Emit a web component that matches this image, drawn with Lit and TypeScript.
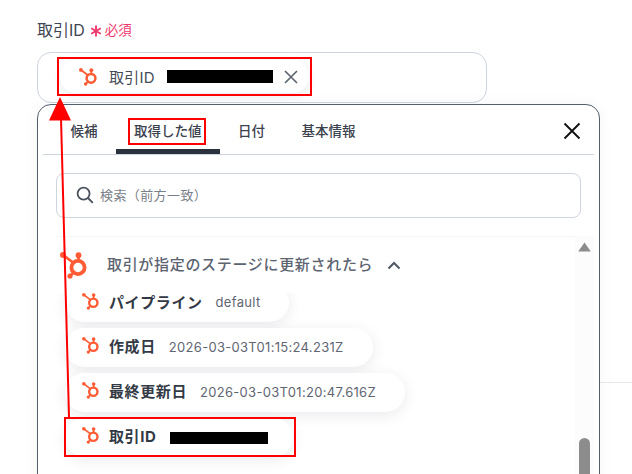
import { LitElement, html, css, svg } from "lit";
import { customElement } from "lit/decorators.js";

const spot = (cls: string) => html`<svg class=${cls} viewBox="0 0 27 27" aria-hidden="true">
  <g fill="none" stroke="#ff5c35" stroke-linecap="round">
    <circle cx="18" cy="15.500" r="6.600" stroke-width="3.800"/>
    <path d="M18.500 8V3.500M13 10.500 3 3M13.500 20.500 10 24" stroke-width="2.800"/>
  </g>
  <circle cx="18.500" cy="3.200" r="2.900" fill="#ff5c35"/>
  <circle cx="2.900" cy="2.900" r="2.900" fill="#ff5c35"/>
  <circle cx="10" cy="24" r="2.600" fill="#ff5c35"/>
</svg>`;

const rows = [
  { name: "パイプライン", value: "default", cls: "first" },
  { name: "作成日", value: "2026-03-03T01:15:24.231Z", cls: "" },
  { name: "最終更新日", value: "2026-03-03T01:20:47.616Z", cls: "" },
];

@customElement("app-root")
export class AppRoot extends LitElement {
  static styles = css`
    :host {
      display: block;
      position: relative;
      width: 632px;
      height: 474px;
      overflow: hidden;
      background: #fff;
      font-family: Inter, "Noto Sans CJK JP", sans-serif;
      color: #3c4350;
    }
    :host::after {
      content: "";
      position: absolute;
      left: 600px;
      right: 0;
      top: 382px;
      height: 1px;
      background: #e6e6e6;
    }
    .page { padding: 19px 0 0 37px; width: 600px; box-sizing: border-box; }
    .label { display: flex; align-items: center; height: 20px; font-size: 16px; color: #3f4652; margin-bottom: 13px; }
    .ast { height: 20px; width: 12px; margin-left: 5px; display: flex; flex: none; }
    .ast svg { width: 12px; height: 12px; margin-top: 6px; }
    .req { color: #ee3a6e; font-size: 13.500px; margin-left: 3px; }
    .field {
      width: 450px; height: 51px; box-sizing: border-box;
      border: 1px solid #ced4df; border-radius: 14px;
      padding: 7px 0 0 22px;
    }
    .chip {
      width: 249px; height: 33px; box-sizing: border-box;
      display: flex; align-items: center;
      border-radius: 17px; background: #fff;
      box-shadow: 0 2px 10px rgba(40, 50, 70, .1);
      padding-left: 19px;
      font-size: 15px; color: #444b57;
    }
    .ic-chip { width: 18px; height: 18px; flex: none; margin-right: 12px; }
    .chip .name { width: 58px; flex: none; letter-spacing: .2px; }
    .mask { background: #000; display: block; flex: none; }
    .chip .mask { width: 106px; height: 13px; }
    .x { width: 14px; height: 14px; margin-left: 11px; flex: none; }
    .pop {
      margin-top: 1px; height: 420px; box-sizing: border-box;
      border: 1px solid #555e6b; border-radius: 14px 14px 0 0;
      background: #fff;
      box-shadow: 0 0 14px rgba(40, 50, 70, .05);
      display: flex; flex-direction: column;
    }
    .tabs {
      display: flex; align-items: flex-end; height: 49px; flex: none;
      margin: 0 5px; border-bottom: 1px solid #cfd5df; padding-left: 9.250px; position: relative;
    }
    .tab {
      height: 44px; box-sizing: border-box; padding: 11px 18.250px 0;
      font-size: 13.500px; font-weight: 500; color: #3b424e; line-height: 20px;
      border-bottom: 5px solid transparent;
    }
    .tab.on { border-bottom-color: #2b323d; border-radius: 5px 5px 0 0; }
    .close { position: absolute; right: 13px; top: 17px; width: 18px; height: 18px; }
    .search {
      flex: none; margin: 18px 18px 0 18px; height: 45px; box-sizing: border-box;
      border: 1px solid #cfd5df; border-radius: 8px;
      display: flex; align-items: center; padding: 0 0 2px 19px;
      font-size: 13px; color: #7a8089; letter-spacing: .4px;
    }
    .search svg { width: 18px; height: 18px; margin-right: 6px; flex: none; }
    .body { flex: 1; margin-top: 18px; display: flex; min-height: 0; }
    .content { flex: 1; min-width: 0; padding-left: 18px; display: flex; flex-direction: column; }
    .head {
      height: 57px; flex: none; box-sizing: border-box; border-top: 1px solid #f3f4f6;
      display: flex; align-items: center; padding: 0 0 3px 4px;
      font-size: 15px; font-weight: 500; color: #5d6471; letter-spacing: .68px;
    }
    .ic-main { width: 27px; height: 27px; flex: none; margin-right: 20px; margin-top: 3px; }
    .chev { width: 14px; height: 9px; margin-left: 14px; flex: none; margin-top: 4px; }
    .list { flex: 1; min-height: 0; overflow: hidden; margin-left: -18px; padding: 0 0 0 27px; display: flex; flex-direction: column; gap: 6px; }
    .pill {
      align-self: flex-start; height: 39px; box-sizing: border-box; flex: none;
      display: flex; align-items: center;
      background: #fff; border-radius: 20px; padding: 0 29px 4px 17px;
      box-shadow: 0 3px 14px rgba(40, 50, 70, .1);
    }
    .pill.first { margin-top: -10px; padding-bottom: 3px; }
    .ic-row { width: 17px; height: 17px; flex: none; margin-right: 10px; }
    .pill b { font-size: 15px; font-weight: 700; color: #333a45; letter-spacing: .6px; margin-right: 13px; }
    .pill span { font-size: 13px; color: #5f6672; letter-spacing: .3px; margin-top: 2px; }
    .pill.pick { width: 228px; padding-right: 0; }
    .pill.pick .mask { width: 98px; height: 12px; margin-top: 4px; margin-left: 1px; }
    .track { flex: none; width: 19px; margin-right: 5px; background: #fcfcfc; display: flex; flex-direction: column; align-items: center; }
    .up { width: 13px; height: 10px; margin-top: 6px; flex: none; }
    .thumb { width: 11px; height: 60px; background: #8c8c8c; border-radius: 6px; margin-top: 186px; flex: none; }
    .arrow { position: absolute; left: 0; top: 0; width: 632px; height: 474px; pointer-events: none; }
    .mark { position: absolute; box-sizing: border-box; border: 2px solid #f00; pointer-events: none; }
    .mark-chip { left: 57px; top: 57px; width: 255px; height: 39px; }
    .mark-tab { left: 128px; top: 118px; width: 78px; height: 27px; }
    .mark-pick { left: 64px; top: 417px; width: 232px; height: 40px; }
  `;

  render() {
    return html`
      <div class="page">
        <div class="label">取引ID<span class="ast"><svg viewBox="0 0 12 12"><path d="M6 .5v11M1.200 3.200l9.600 5.600M10.800 3.200l-9.600 5.600" stroke="#ee3a6e" stroke-width="1.900" fill="none"/></svg></span><span class="req">必須</span></div>
        <div class="field">
          <div class="chip">
            ${spot("ic-chip")}
            <span class="name">取引ID</span>
            <i class="mask"></i>
            <svg class="x" viewBox="0 0 14 14"><path d="M1 1l12 12M13 1 1 13" stroke="#5e6671" stroke-width="1.700" fill="none"/></svg>
          </div>
        </div>
        <div class="pop">
          <div class="tabs">
            <div class="tab">候補</div>
            <div class="tab on">取得した値</div>
            <div class="tab">日付</div>
            <div class="tab">基本情報</div>
            <svg class="close" viewBox="0 0 18 18"><path d="M1.500 1.500l15 15M16.500 1.500l-15 15" stroke="#111" stroke-width="1.900" fill="none"/></svg>
          </div>
          <div class="search">
            <svg viewBox="0 0 18 18"><circle cx="7.600" cy="7.600" r="6" fill="none" stroke="#4a515c" stroke-width="1.800"/><path d="M12 12l4.800 4.800" stroke="#4a515c" stroke-width="1.800"/></svg>
            検索（前方一致）
          </div>
          <div class="body">
            <div class="content">
              <div class="head">
                ${spot("ic-main")}
                取引が指定のステージに更新されたら
                <svg class="chev" viewBox="0 0 14 9"><path d="M1.500 7.500 7 2l5.500 5.500" stroke="#4f5763" stroke-width="2" fill="none"/></svg>
              </div>
              <div class="list">
                ${rows.map(r => html`<div class="pill ${r.cls}">${spot("ic-row")}<b>${r.name}</b><span>${r.value}</span></div>`)}
                <div class="pill pick">${spot("ic-row")}<b>取引ID</b><i class="mask"></i></div>
              </div>
            </div>
            <div class="track">
              <svg class="up" viewBox="0 0 13 10"><path d="M6.500 .5 12.800 9.500H.2z" fill="#8c8c8c"/></svg>
              <div class="thumb"></div>
            </div>
          </div>
        </div>
      </div>
      <div class="mark mark-chip"></div>
      <div class="mark mark-tab"></div>
      <div class="mark mark-pick"></div>
      <svg class="arrow" viewBox="0 0 632 474">${svg`
        <path d="M61 118 69 417" stroke="#f00" stroke-width="2" fill="none"/>
        <path d="M60 97 71 120.500H49z" fill="#f00"/>`}
      </svg>
    `;
  }
}
